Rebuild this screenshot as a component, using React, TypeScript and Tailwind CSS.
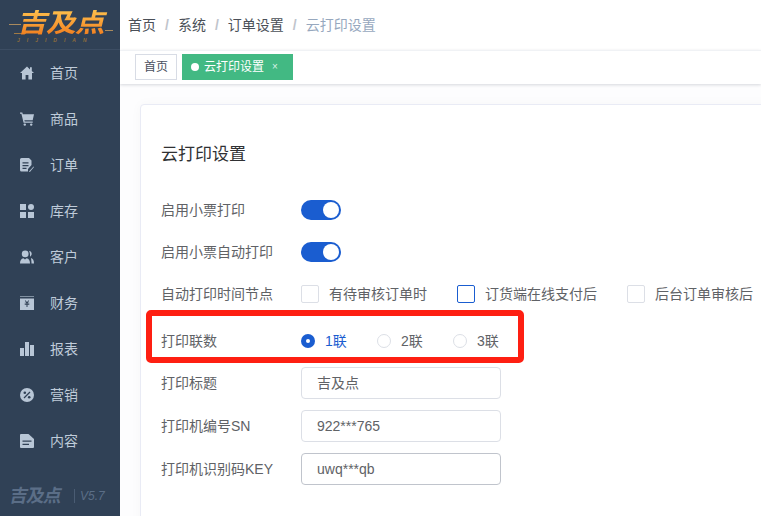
import React from 'react';

const font = '[font-family:"Liberation_Sans","Noto_Sans_CJK_SC",sans-serif]';

const HomeIcon = () => (
  <svg viewBox="0 0 14 14" className="w-[14px] h-[14px]" fill="currentColor">
    <path d="M7 .5 0 7h2v6.500h3.600V9h2.800v4.500H12V7h2l-2.200-2V1.200H10v2.200z" />
  </svg>
);
const CartIcon = () => (
  <svg viewBox="0 0 14 14" className="w-[14px] h-[14px]" fill="currentColor">
    <path d="M0 .5h2.300l.5 1.700H14l-1.300 6H4.400l.3 1.300h8v1.200H3.600L1.400 1.700H0z" />
    <circle cx="4.800" cy="12.600" r="1.200" />
    <circle cx="11.200" cy="12.600" r="1.200" />
  </svg>
);
const OrderIcon = () => (
  <svg viewBox="0 0 14 14" className="w-[14px] h-[14px]" fill="currentColor">
    <path d="M1.500 0H9l2.500 2.500V7L8 11v2.500H1.500A1.500 1.500 0 0 1 0 12V1.500A1.500 1.500 0 0 1 1.500 0z" />
    <path d="M2.500 4.200h6v1.200h-6zM2.500 7h6v1.200h-6zM2.500 9.800h4V11h-4z" fill="#304156" />
    <path d="M9 13.500 13.600 8.600l.4.5-4.200 5z" />
  </svg>
);
const StockIcon = () => (
  <svg viewBox="0 0 14 14" className="w-[14px] h-[14px]" fill="currentColor">
    <rect x="0" y="0" width="6" height="6" />
    <circle cx="11" cy="3" r="3" />
    <rect x="0" y="8" width="6" height="6" />
    <rect x="8" y="8" width="6" height="6" />
  </svg>
);
const CustomerIcon = () => (
  <svg viewBox="0 0 14 14" className="w-[14px] h-[14px]" fill="currentColor">
    <circle cx="5.200" cy="3.800" r="3.400" />
    <path d="M0 13.500c0-3 1.200-5 3.400-5.300L5 9.500l1.600-1.300C9 8.500 10 10.500 10 13.500z" />
    <path d="M9 .8c2 .4 3 2 2.600 3.800-.2 1-.8 1.700-1.600 2.200.2-2.200-.2-4.400-1-6zM11 8c2 .6 3 2.500 3 5.500h-2.500C11.500 11.500 11.200 9.500 11 8z" />
  </svg>
);
const FinanceIcon = () => (
  <svg viewBox="0 0 14 14" className="w-[14px] h-[14px]" fill="currentColor">
    <rect x="0" y="0" width="14" height="1" opacity="0.6" />
    <path d="M0 2.500h14V14H0z" />
    <path d="M4.800 4.500h1l1.200 1.800 1.200-1.800h1L7.800 6.700h1.500v.8H7.500v.8h1.800v.8H7.500V11h-1V9.100H4.700v-.8h1.800v-.8H4.700v-.8h1.500z" fill="#304156" />
  </svg>
);
const ReportIcon = () => (
  <svg viewBox="0 0 14 14" className="w-[14px] h-[14px]" fill="currentColor">
    <rect x="0" y="6" width="4" height="8" />
    <rect x="5" y="0" width="4" height="14" />
    <rect x="10" y="3" width="4" height="11" />
  </svg>
);
const MarketingIcon = () => (
  <svg viewBox="0 0 14 14" className="w-[14px] h-[14px]">
    <circle cx="7" cy="7" r="7" fill="currentColor" />
    <path d="M10 4 4 10" stroke="#304156" strokeWidth="1.200" />
    <circle cx="4.800" cy="4.800" r="1.300" fill="#304156" />
    <circle cx="9.200" cy="9.200" r="1.300" fill="#304156" />
  </svg>
);
const ContentIcon = () => (
  <svg viewBox="0 0 14 14" className="w-[14px] h-[14px]" fill="currentColor">
    <path d="M1 0h7.500L14 5v8a1 1 0 0 1-1 1H1a1 1 0 0 1-1-1V1a1 1 0 0 1 1-1z" />
    <path d="M2.500 6.500h9v1.300h-9zM2.500 9.800h6.500v1.300H2.500z" fill="#304156" />
  </svg>
);

const navItems = [
  { label: '首页', icon: <HomeIcon /> },
  { label: '商品', icon: <CartIcon /> },
  { label: '订单', icon: <OrderIcon /> },
  { label: '库存', icon: <StockIcon /> },
  { label: '客户', icon: <CustomerIcon /> },
  { label: '财务', icon: <FinanceIcon /> },
  { label: '报表', icon: <ReportIcon /> },
  { label: '营销', icon: <MarketingIcon /> },
  { label: '内容', icon: <ContentIcon /> },
];

function Logo() {
  return (
    <div className="h-[50px] shrink-0 border-b border-[#3c4d63] relative overflow-hidden">
      {/* speed lines around the logo */}
      <span className="absolute left-[9px] top-[24px] w-[12px] h-[1px] bg-[#a98a5e]" />
      <span className="absolute left-[105px] top-[30px] w-[8px] h-[1px] bg-[#a98a5e]" />
      <span className="absolute left-[14px] top-[33px] w-[12px] h-[1px] bg-[#a07a45]" />
      <span className="absolute left-[28px] top-[13px] w-[14px] h-[2px] bg-[#f3b14a]" />
      <div className="absolute left-[18px] top-[10px] w-[90px] h-[26px] flex items-center justify-center">
        <span className="inline-block font-bold text-[26px] leading-[26px] tracking-[-1px] whitespace-nowrap -skew-x-12 scale-x-[1.16] bg-gradient-to-b from-[#fdc04c] to-[#f07c1c] bg-clip-text text-transparent">
          吉及点
        </span>
      </div>
      <span className="absolute top-[38px] left-[17px] whitespace-nowrap text-[5px] leading-none tracking-[7px] text-[#8f6d3c] italic font-bold">
        JIJIDIAN
      </span>
    </div>
  );
}

function Sidebar() {
  return (
    <aside className="w-[120px] shrink-0 h-full bg-[#304156] flex flex-col">
      <Logo />
      <nav className="flex-1">
        {navItems.map((item) => (
          <div key={item.label} className="h-[46px] flex items-center pl-[20px] text-[#bfcbd9]">
            <span className="w-[30px] shrink-0 flex text-[#b8c6d6]">{item.icon}</span>
            <span className="text-[14px] leading-none">{item.label}</span>
          </div>
        ))}
      </nav>
      <div className="h-[41px] shrink-0 flex items-center pl-[10px] text-[#5b6e87]">
        <span className="inline-block font-bold text-[18px] leading-none tracking-[-1px] -skew-x-12">吉及点</span>
        <span className="ml-[13px] pl-[5px] border-l border-[#4a5c73] text-[12px] italic leading-[14px]">V5.7</span>
      </div>
    </aside>
  );
}

function Breadcrumb() {
  const items = ['首页', '系统', '订单设置'];
  return (
    <div className="h-[50px] shrink-0 flex items-center pl-[8px] text-[14px] bg-white">
      {items.map((item) => (
        <React.Fragment key={item}>
          <span className="text-[#4a4f57]">{item}</span>
          <span className="mx-[9px] text-[#c0c4cc] font-bold">/</span>
        </React.Fragment>
      ))}
      <span className="text-[#97a8be]">云打印设置</span>
    </div>
  );
}

function Tabs() {
  return (
    <div className="h-[34px] shrink-0 bg-white flex items-start pt-[3px] pl-[15px] gap-[5px] border-t border-[#f0f2f5] shadow-[0_1px_3px_rgba(0,21,41,0.16)] relative">
      <div className="h-[26px] w-[42px] border border-[#d8dce5] flex items-center justify-center text-[12px] text-[#495060]">
        首页
      </div>
      <div className="h-[26px] w-[111px] bg-[#42b983] flex items-center pl-[9px] text-[12px] text-white">
        <span className="w-[8px] h-[8px] rounded-full bg-white mr-[5px]" />
        云打印设置
        <span className="ml-[8px] text-[10px] leading-none text-[#d9f2e6]">×</span>
      </div>
    </div>
  );
}

function Row({ label, className, children }: { label: string; className: string; children: React.ReactNode }) {
  return (
    <div className={`flex items-center ${className}`}>
      <label className="w-[140px] shrink-0 text-[14px] text-[#606266]">{label}</label>
      {children}
    </div>
  );
}

function Toggle() {
  return (
    <span className="w-[40px] h-[20px] rounded-full bg-[#1a5dd0] flex items-center justify-end pr-[2px]">
      <span className="w-[16px] h-[16px] rounded-full bg-white" />
    </span>
  );
}

function Check({ label, active, width }: { label: string; active?: boolean; width: string }) {
  return (
    <span className={`flex items-center ${width}`}>
      <span className={`w-[18px] h-[18px] rounded-[2px] border bg-white ${active ? 'border-[#1a5dd0]' : 'border-[#dcdfe6]'}`} />
      <span className="ml-[10px] text-[14px] text-[#606266] whitespace-nowrap">{label}</span>
    </span>
  );
}

function Radio({ label, checked, width }: { label: string; checked?: boolean; width: string }) {
  return (
    <span className={`flex items-center ${width}`}>
      {checked ? (
        <span className="w-[14px] h-[14px] rounded-full bg-[#1a5dd0] flex items-center justify-center">
          <span className="w-[4px] h-[4px] rounded-full bg-white" />
        </span>
      ) : (
        <span className="w-[14px] h-[14px] rounded-full border border-[#dcdfe6] bg-white" />
      )}
      <span className={`ml-[10px] text-[14px] ${checked ? 'text-[#1a5dd0]' : 'text-[#606266]'}`}>{label}</span>
    </span>
  );
}

function TextInput({ value, strong }: { value: string; strong?: boolean }) {
  return (
    <div className={`w-[200px] h-[32px] rounded-[4px] border bg-white flex items-center pl-[15px] text-[14px] text-[#606266] ${strong ? 'border-[#c0c4cc]' : 'border-[#dcdfe6]'}`}>
      {value}
    </div>
  );
}

export default function App() {
  return (
    <div className={`w-[761px] h-[516px] overflow-hidden flex relative ${font}`}>
      <Sidebar />
      <main className="flex-1 min-w-0 flex flex-col bg-white overflow-hidden">
        <Breadcrumb />
        <Tabs />
        <div className="flex-1 min-h-0 pl-[20px] pt-[20px] bg-[#fdfdfe]">
          <div className="w-[640px] h-[432px] bg-white border border-[#e9ebf5] rounded-[4px] pl-[20px] shadow-[0_0_12px_rgba(0,21,41,0.03)]">
            <h2 className="text-[17px] leading-[24px] font-normal text-[#303133] mt-[38px] mb-[32px]">云打印设置</h2>
            <Row label="启用小票打印" className="h-[22px] mb-[20px]"><Toggle /></Row>
            <Row label="启用小票自动打印" className="h-[22px] mb-[20px]"><Toggle /></Row>
            <Row label="自动打印时间节点" className="h-[22px] mb-[25px]">
              <Check label="有待审核订单时" width="w-[156px]" />
              <Check label="订货端在线支付后" active width="w-[170px]" />
              <Check label="后台订单审核后" width="w-[140px]" />
            </Row>
            <Row label="打印联数" className="h-[22px] mb-[15px]">
              <Radio label="1联" checked width="w-[76px]" />
              <Radio label="2联" width="w-[76px]" />
              <Radio label="3联" width="w-[60px]" />
            </Row>
            <Row label="打印标题" className="h-[32px] mb-[11px]"><TextInput value="吉及点" /></Row>
            <Row label="打印机编号SN" className="h-[32px] mb-[11px]"><TextInput value="922***765" /></Row>
            <Row label="打印机识别码KEY" className="h-[32px]"><TextInput value="uwq***qb" strong /></Row>
          </div>
        </div>
      </main>
      <div className="absolute left-[146px] top-[310px] w-[378px] h-[53px] border-[6px] border-[#fe1f12] rounded-[5px]" />
    </div>
  );
}
